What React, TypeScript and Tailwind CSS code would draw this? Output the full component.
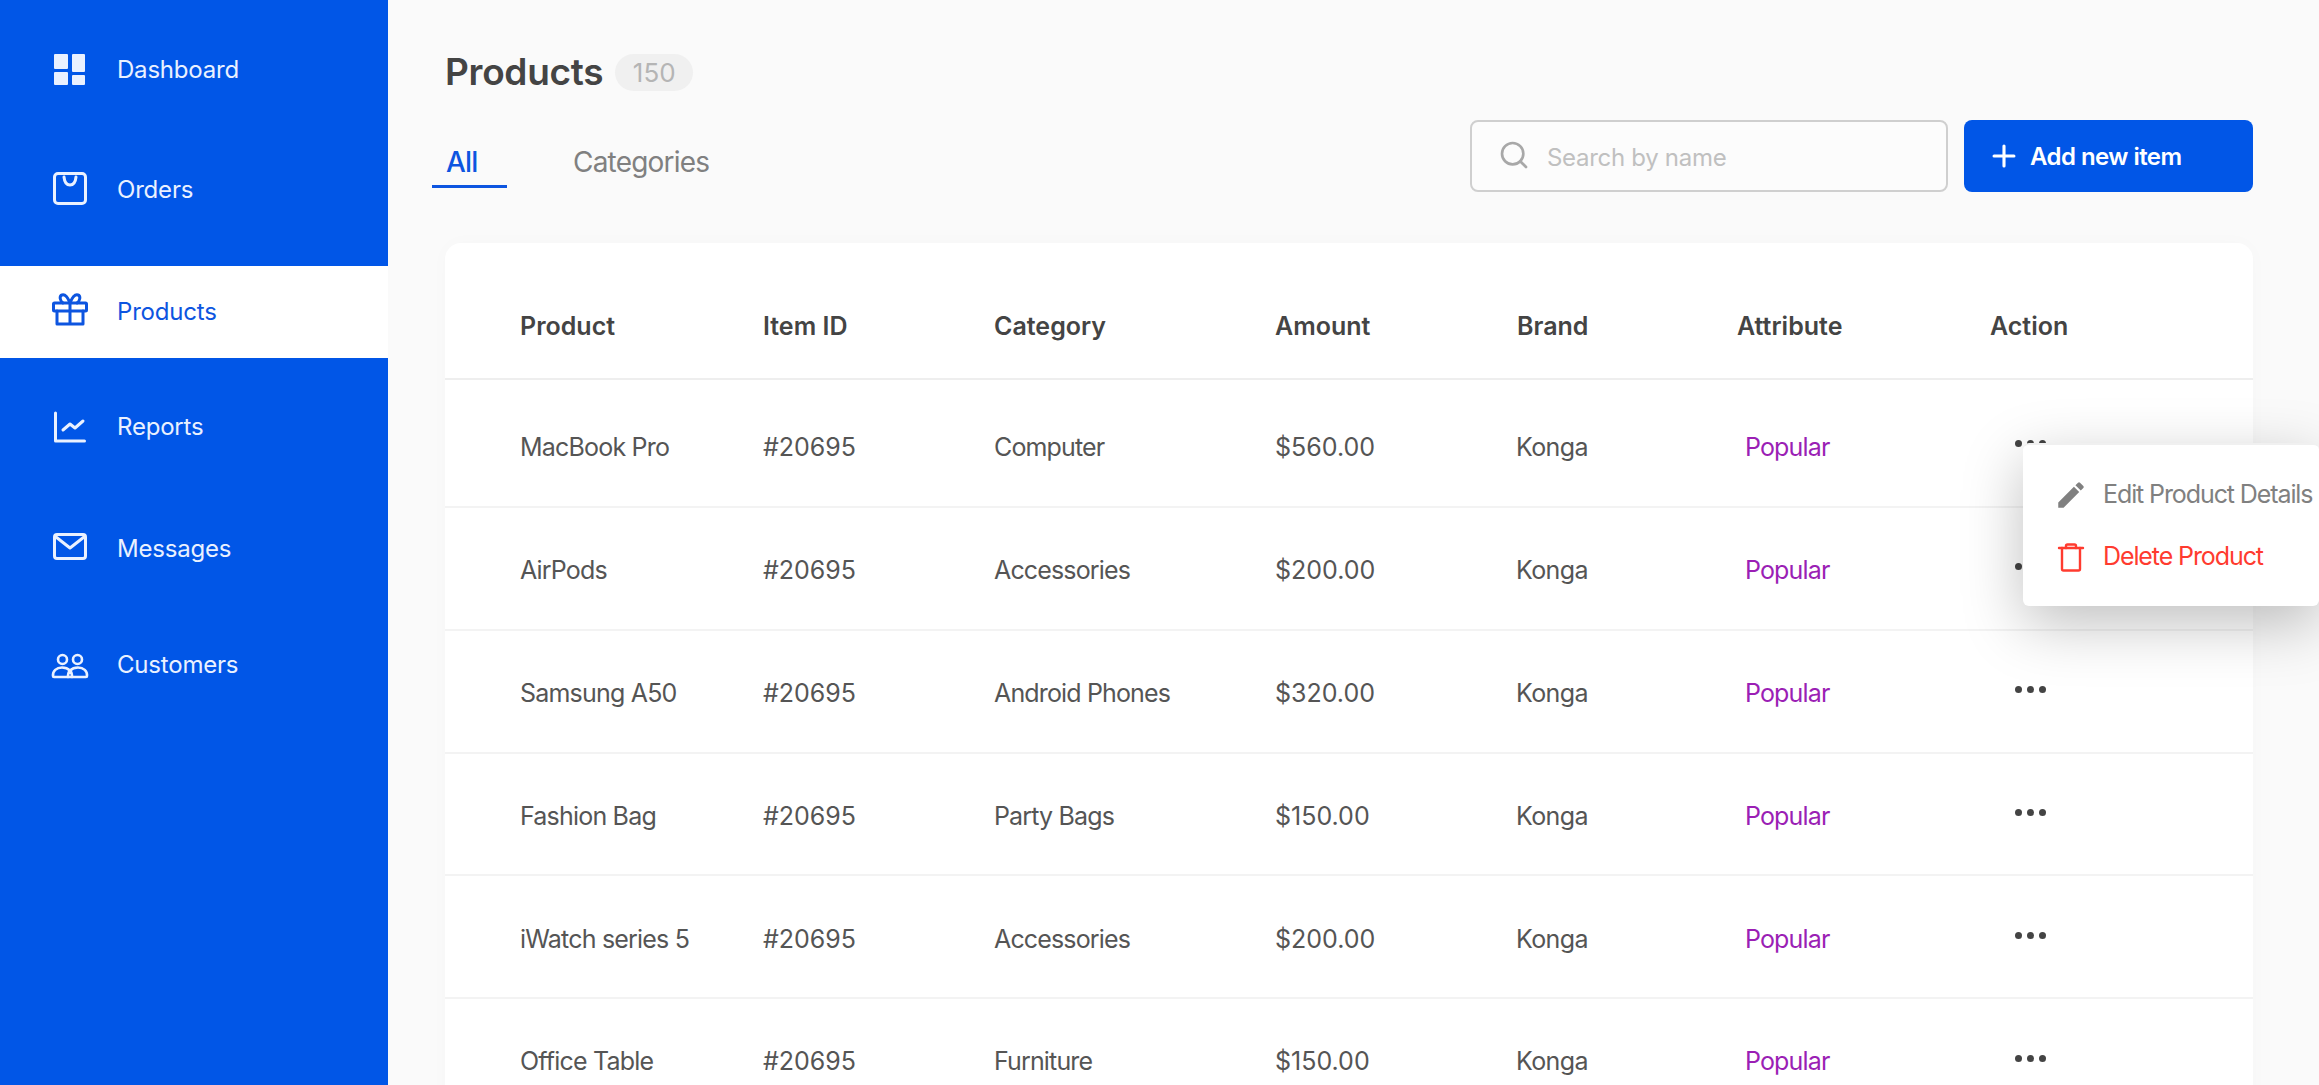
import { Plus, Search } from "lucide-react";

const products = [
  { name: "MacBook Pro", category: "Computer", amount: "$560.00" },
  { name: "AirPods", category: "Accessories", amount: "$200.00" },
  { name: "Samsung A50", category: "Android Phones", amount: "$320.00" },
  { name: "Fashion Bag", category: "Party Bags", amount: "$150.00" },
  { name: "iWatch series 5", category: "Accessories", amount: "$200.00" },
  { name: "Office Table", category: "Furniture", amount: "$150.00" },
];

function DashboardIcon() {
  return (
    <svg width="40" height="40" viewBox="0 0 40 40" fill="currentColor">
      <rect x="4" y="4" width="14" height="15" rx="1" />
      <rect x="22" y="4" width="13" height="18" rx="1" />
      <rect x="4" y="22" width="14" height="13" rx="1" />
      <rect x="22" y="25" width="13" height="10" rx="1" />
    </svg>
  );
}

function OrdersIcon() {
  return (
    <svg width="40" height="40" viewBox="0 0 40 40" fill="none" stroke="currentColor" strokeWidth="3" strokeLinecap="round" strokeLinejoin="round">
      <rect x="4.500" y="4.500" width="31" height="30" rx="3.500" />
      <path d="M14 8c.5 5 2.500 8 6 8s5.500-3 6-8" />
    </svg>
  );
}

function GiftIcon() {
  return (
    <svg width="40" height="40" viewBox="0 0 40 40" fill="none" stroke="currentColor" strokeWidth="3" strokeLinecap="round" strokeLinejoin="round">
      <rect x="3.500" y="11" width="33" height="8" rx="1" />
      <path d="M7 19v13h26V19M20 11v21" />
      <path d="M20 11c-2-5-5-9-8-8-3 1-2 6 1 8M20 11c2-5 5-9 8-8 3 1 2 6-1 8" />
    </svg>
  );
}

function ReportsIcon() {
  return (
    <svg width="40" height="40" viewBox="0 0 40 40" fill="none" stroke="currentColor" strokeWidth="3" strokeLinecap="round" strokeLinejoin="round">
      <path d="M5.500 7v28h29" />
      <path d="M13 24l7-6 5 4 8-7" />
    </svg>
  );
}

function MailIcon() {
  return (
    <svg width="40" height="40" viewBox="0 0 40 40" fill="none" stroke="currentColor" strokeWidth="3" strokeLinecap="round" strokeLinejoin="round">
      <rect x="4.500" y="6.500" width="31" height="24" rx="2.500" />
      <path d="M6 9l14 11L34 9" />
    </svg>
  );
}

function CustomersIcon() {
  return (
    <svg width="40" height="40" viewBox="0 0 40 40" fill="none" stroke="currentColor" strokeWidth="2.600" strokeLinecap="round" strokeLinejoin="round">
      <circle cx="12.500" cy="14.500" r="4.500" />
      <circle cx="27.500" cy="14.500" r="4.500" />
      <path d="M3 31c-.5-5 3.500-8.500 9-8.500 3.500 0 6 1 8 3 2-2 4.500-3 8-3 5.500 0 9.500 3.500 9 8.500 0 .5-.5 1-1 1H4c-.5 0-1-.5-1-1z" />
      <path d="M20 25.500c-1.500 1.500-2 3.500-2 6.500M20 25.500c1.500 1.500 2 3.500 2 6.500" />
    </svg>
  );
}

function PencilIcon() {
  return (
    <svg width="34" height="34" viewBox="0 0 24 24" fill="currentColor">
      <path d="M3 17.250V21h3.750L17.810 9.940l-3.750-3.750L3 17.250zM20.710 7.040a1 1 0 0 0 0-1.410l-2.340-2.340a1 1 0 0 0-1.410 0l-1.830 1.830 3.750 3.750 1.830-1.830z" />
    </svg>
  );
}

function TrashIcon() {
  return (
    <svg width="34" height="34" viewBox="0 0 34 34" fill="none" stroke="currentColor" strokeWidth="2.400" strokeLinecap="round" strokeLinejoin="round">
      <path d="M5 8h24" />
      <path d="M8 8v21a1.500 1.500 0 0 0 1.500 1.500h15A1.500 1.500 0 0 0 26 29V8" />
      <path d="M12 8V6a1.500 1.500 0 0 1 1.500-1.500h7A1.500 1.500 0 0 1 22 6v2" />
    </svg>
  );
}

function Dots() {
  return (
    <div className="flex gap-[5px] mb-[8px]">
      <span className="w-[7px] h-[7px] rounded-full bg-[#444444]"></span>
      <span className="w-[7px] h-[7px] rounded-full bg-[#444444]"></span>
      <span className="w-[7px] h-[7px] rounded-full bg-[#444444]"></span>
    </div>
  );
}

export default function App() {
  return (
    <div className="w-[2319px] h-[1085px] overflow-hidden flex bg-[#fafafa] text-[#4a4a4a] font-['Inter',sans-serif]">
      {/* Sidebar */}
      <aside className="w-[388px] shrink-0 bg-[#0156e7] text-[#eaf1ff] text-[24px] tracking-[-0.2px]">
        <div className="flex items-center h-[92px] mt-[24px] pl-[50px] gap-[27px]">
          <DashboardIcon />
          <span>Dashboard</span>
        </div>
        <div className="flex items-center h-[92px] mt-[27px] pl-[50px] gap-[27px]">
          <OrdersIcon />
          <span className="mt-[2px]">Orders</span>
        </div>
        <div className="flex items-center h-[92px] mt-[31px] pl-[50px] gap-[27px] bg-white text-[#0d55e0]">
          <GiftIcon />
          <span>Products</span>
        </div>
        <div className="flex items-center h-[92px] mt-[22px] pl-[50px] gap-[27px]">
          <ReportsIcon />
          <span className="mt-[2px]">Reports</span>
        </div>
        <div className="flex items-center h-[92px] mt-[30px] pl-[50px] gap-[27px]">
          <MailIcon />
          <span className="mt-[2px]">Messages</span>
        </div>
        <div className="flex items-center h-[92px] mt-[25px] pl-[50px] gap-[27px]">
          <CustomersIcon />
          <span>Customers</span>
        </div>
      </aside>

      {/* Main */}
      <main className="flex-1 pl-[57px] pr-[66px]">
        <div className="flex items-center gap-[12px] pt-[50px] h-[94px]">
          <h1 className="text-[37px] font-semibold tracking-[-0.3px] text-[#444444]">Products</h1>
          <span className="w-[78px] h-[37px] rounded-full bg-[#f0f0f0] text-[#b5b5b5] text-[26px] flex items-center justify-center">150</span>
        </div>

        <div className="flex items-start justify-between mt-[26px] h-[123px]">
          <div className="flex items-start -ml-[13px]">
            <div className="w-[75px] h-[68px] border-b-[3px] border-[#0d55e0] pt-[24px] pl-[14px] text-[28px] font-medium tracking-[-0.8px] text-[#0d55e0] leading-[36px]">All</div>
            <div className="ml-[66px] pt-[24px] text-[28px] tracking-[-0.8px] text-[#808080] leading-[36px]">Categories</div>
          </div>
          <div className="flex gap-[16px]">
            <div className="w-[478px] h-[72px] rounded-[8px] border-2 border-[#cfcfcf] flex items-center pl-[26px] gap-[17px] bg-[#fcfcfc]">
              <Search size={32} strokeWidth={2} className="text-[#a8a8a8] -mt-[2px]" />
              <span className="text-[24px] tracking-[-0.3px] text-[#c0c0c0] mt-[4px]">Search by name</span>
            </div>
            <div className="w-[289px] h-[72px] rounded-[8px] bg-[#0156e7] text-white flex items-center pl-[23px] gap-[9px]">
              <Plus size={34} strokeWidth={2.2} />
              <span className="text-[24px] font-semibold tracking-[-0.55px] mt-[1px]">Add new item</span>
            </div>
          </div>
        </div>

        {/* Table */}
        <div className="relative bg-white rounded-t-[16px] shadow-[0_0_20px_rgba(0,0,0,0.02)]">
          <div className="grid grid-cols-[243px_231px_281px_242px_220px_253px_1fr] items-center pl-[75px] pt-[32px] h-[137px] border-b-2 border-[#eeeeee] text-[25px] font-semibold text-[#444444]">
            <span>Product</span>
            <span>Item ID</span>
            <span>Category</span>
            <span>Amount</span>
            <span>Brand</span>
            <span>Attribute</span>
            <span>Action</span>
          </div>
          {products.map((p, i) => (
            <div
              key={p.name}
              className={
                i === 0
                  ? "grid grid-cols-[243px_231px_281px_241px_229px_270px_1fr] items-center pl-[75px] h-[128px] pt-[9px] border-b-2 border-[#f3f3f3] text-[25px] text-[#555555]"
                  : "grid grid-cols-[243px_231px_281px_241px_229px_270px_1fr] items-center pl-[75px] h-[122.8px] pt-[5px] border-b-2 border-[#f3f3f3] text-[25px] text-[#555555]"
              }
            >
              <span className="tracking-[-0.8px]">{p.name}</span>
              <span>#20695</span>
              <span className="tracking-[-0.85px]">{p.category}</span>
              <span>{p.amount}</span>
              <span className="tracking-[-0.6px]">Konga</span>
              <span className="tracking-[-0.85px] text-[#9b1fb5]">Popular</span>
              <Dots />
            </div>
          ))}

          {/* Row action menu */}
          <div className="absolute left-[1578px] top-[200px] w-[296px] h-[163px] pt-[19px] pl-[31px] bg-white rounded-[6px] border-t-2 border-[#f0f0f0] shadow-[0_18px_60px_rgba(0,0,0,0.25)] text-[25px] tracking-[-1.1px] whitespace-nowrap">
            <div className="flex items-center h-[62px] gap-[15px] text-[#808080]">
              <PencilIcon />
              <span>Edit Product Details</span>
            </div>
            <div className="flex items-center h-[62px] gap-[15px] text-[#ff3b2f]">
              <TrashIcon />
              <span>Delete Product</span>
            </div>
          </div>
        </div>
      </main>
    </div>
  );
}
